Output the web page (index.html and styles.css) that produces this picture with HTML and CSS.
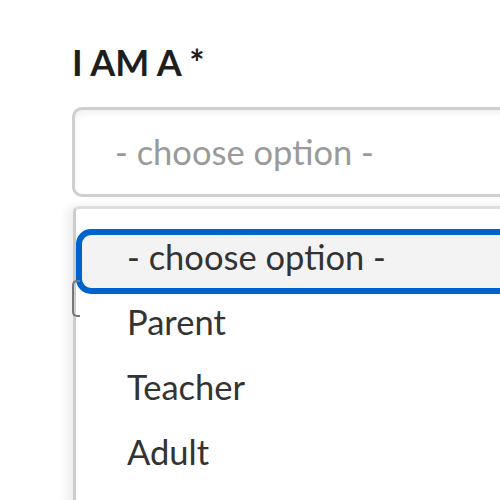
FILE: index.html
```html
<!DOCTYPE html>
<html lang="en">
<head>
    <meta charset="UTF-8">
    <meta name="viewport" content="width=device-width, initial-scale=1.0">
    <title>I am a</title>
    <link rel="stylesheet" href="styles.css">
</head>
<body>
    <div class="field">
        <label class="field-label" for="role">I AM A *</label>
        <div class="select-box" id="role">
            <span class="placeholder">- choose option -</span>
        </div>
        <span class="peek"></span>
        <ul class="dropdown">
            <li class="option selected">- choose option -</li>
            <li class="option">Parent</li>
            <li class="option">Teacher</li>
            <li class="option">Adult</li>
        </ul>
    </div>
</body>
</html>
```

FILE: styles.css
```css
body {
    margin: 0;
    background: #fff;
    font-family: Lato, "Open Sans", sans-serif;
    overflow: hidden;
}

.field {
    position: relative;
    padding: 42px 0 0 72px;
    width: 520px;
}

.field-label {
    display: block;
    font-size: 36px;
    font-weight: 700;
    color: #1e1e1e;
    line-height: 40px;
    margin-bottom: 25px;
}

.select-box {
    height: 84px;
    border: 3px solid #cfcfcf;
    border-radius: 10px;
    box-shadow: inset 0 4px 6px rgba(0, 0, 0, 0.05);
    display: flex;
    align-items: center;
    padding-left: 40px;
}

.placeholder {
    font-size: 34.5px;
    color: #9a9a9a;
    padding-bottom: 2px;
}

.dropdown {
    list-style: none;
    margin: 9px 0 0 1px;
    padding: 20px 0 0 0;
    border: 3px solid #cdcdcd;
    border-top-color: #dedede;
    border-bottom: none;
    border-radius: 6px 0 0 0;
    box-shadow: -6px 0 10px rgba(0, 0, 0, 0.07);
    height: 300px;
}

.option {
    height: 43px;
    padding-bottom: 10px;
    border: 6px solid transparent;
    border-radius: 15px;
    padding-left: 45px;
    display: flex;
    align-items: center;
    font-size: 34.5px;
    color: #333;
}

.option.selected {
    border-color: #0062cc;
    background: #f3f3f3;
}

.peek {
    position: absolute;
    left: 72px;
    top: 280px;
    width: 6px;
    height: 33px;
    border: 2px solid #777;
    border-right: none;
    border-radius: 5px 0 0 5px;
}
```
